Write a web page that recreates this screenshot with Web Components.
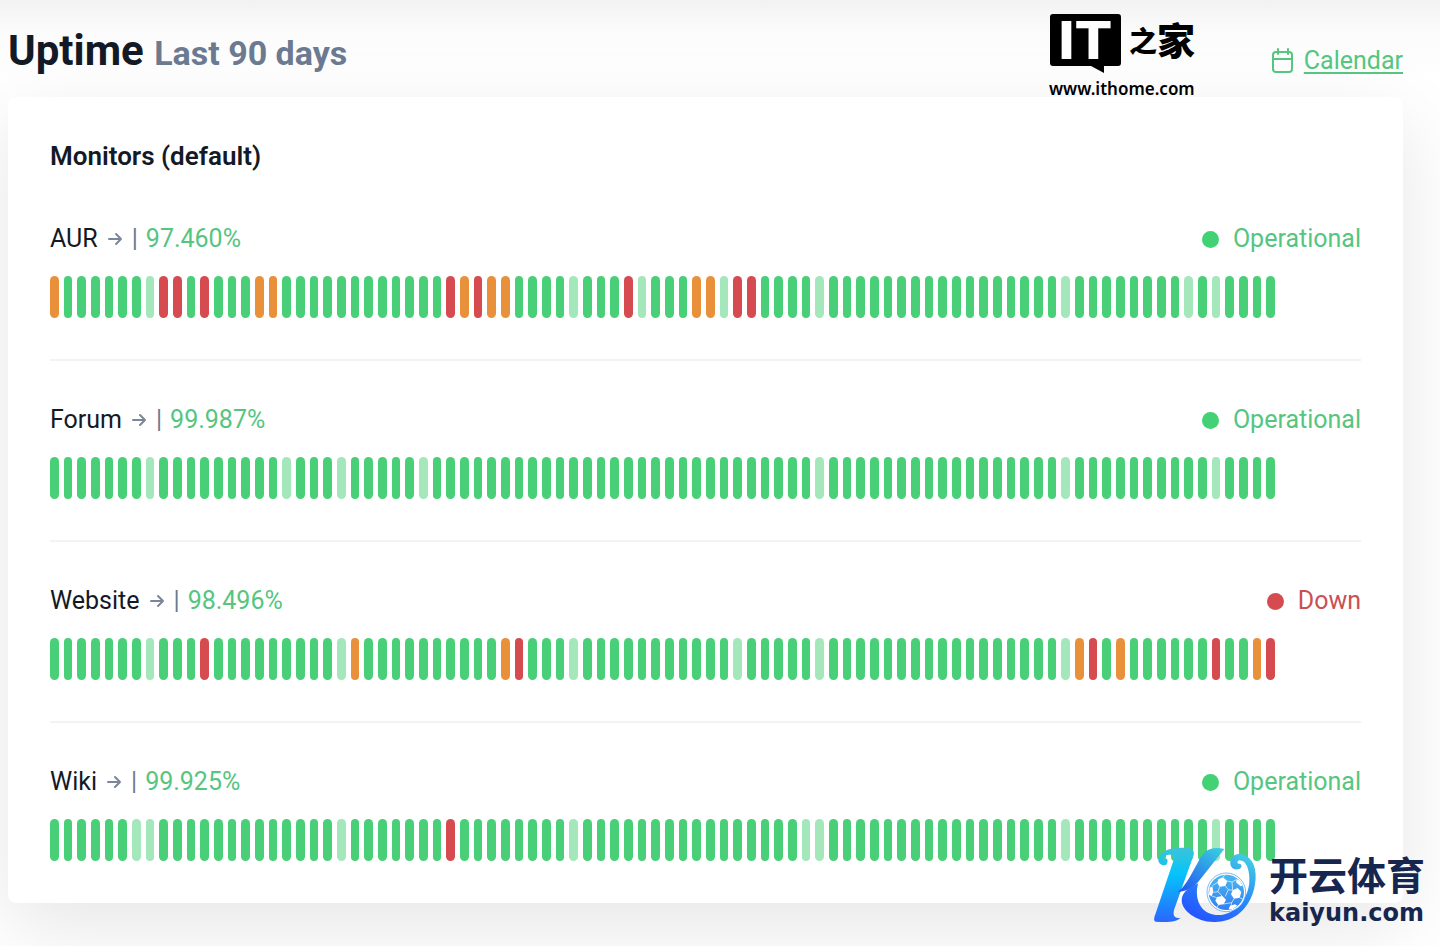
<!DOCTYPE html>
<html lang="en">
<head>
<meta charset="utf-8">
<meta name="viewport" content="width=device-width, initial-scale=1">
<title>Uptime</title>
<style>
  body {
    margin: 0;
    background: #fff;
    color: #131a26;
    font-family: Roboto, "Noto Sans CJK SC", sans-serif;
    font-size: 25px;
    line-height: 30px;
  }
</style>
</head>
<body>
<status-page>
  <uptime-header slot="header" heading="Uptime" period="Last 90 days">
    <ithome-logo></ithome-logo>
  </uptime-header>
  <monitor-group name="Monitors (default)">
    <monitor-row name="AUR" uptime="97.460%" status="up" partial="0 15 16 30 32 33 47 48" down="8 9 11 29 31 42 50 51" minor="7 38 43 49 56 74 83 85"></monitor-row>
    <monitor-row name="Forum" uptime="99.987%" status="up" minor="7 17 21 27 56 74 85"></monitor-row>
    <monitor-row name="Website" uptime="98.496%" status="down" partial="22 33 75 78 88" down="11 34 76 85 89" minor="7 21 38 50 56 74"></monitor-row>
    <monitor-row name="Wiki" uptime="99.925%" status="up" down="29" minor="6 7 21 38 55 56 74 85"></monitor-row>
  </monitor-group>
  <kaiyun-logo slot="sponsor"></kaiyun-logo>
</status-page>

<script>
class StatusPage extends HTMLElement {
  connectedCallback() {
    this.attachShadow({ mode: 'open' });
    this.shadowRoot.innerHTML = `
      <style>
        :host {
          display: block;
          position: relative;
          box-sizing: border-box;
          min-height: 100vh;
          padding: 0 37px 43px 8px;
          overflow: hidden;
          background: linear-gradient(#f2f2f2, #fbfbfb 32px, #fff 80px);
        }
        .sponsor {
          position: absolute;
          right: 15px;
          bottom: 18px;
        }
      </style>
      <slot name="header"></slot>
      <main><slot></slot></main>
      <div class="sponsor"><slot name="sponsor"></slot></div>
    `;
  }
}

class UptimeHeader extends HTMLElement {
  connectedCallback() {
    this.attachShadow({ mode: 'open' });
    this.shadowRoot.innerHTML = `
      <style>
        :host {
          display: flex;
          align-items: flex-start;
          height: 97px;
        }
        h1 {
          flex: 1;
          margin: 26px 0 0;
          font-size: 42px;
          line-height: 50px;
          font-weight: 700;
        }
        h1 small {
          font-size: 34px;
          color: #6b7a90;
        }
        a {
          display: flex;
          align-items: center;
          gap: 9px;
          margin: 46px 0 0 76px;
          color: #55c57f;
          text-underline-offset: 3px;
        }
        svg {
          width: 24px;
          height: 26px;
        }
      </style>
      <h1>${this.getAttribute('heading')} <small>${this.getAttribute('period')}</small></h1>
      <slot></slot>
      <a href="#calendar">
        <svg viewBox="0 0 24 26" fill="none" stroke="currentColor" stroke-width="2" stroke-linecap="round" stroke-linejoin="round" aria-hidden="true">
          <rect x="2" y="4" width="19" height="20" rx="3"/>
          <path d="M2 11h19M7 1v5M17 1v5"/>
        </svg>
        <span>Calendar</span>
      </a>
    `;
  }
}

class MonitorGroup extends HTMLElement {
  connectedCallback() {
    this.attachShadow({ mode: 'open' });
    this.shadowRoot.innerHTML = `
      <style>
        :host {
          display: block;
          padding: 44px 42px 42px;
          border-radius: 8px;
          background: #fff;
          box-shadow: 0 24px 80px rgba(0, 0, 0, 0.1);
        }
        h2 {
          margin: 0 0 53px;
          font-size: 26px;
          font-weight: 600;
        }
        ::slotted(:not(:last-child)) {
          margin-bottom: 44px;
          padding-bottom: 41px;
          border-bottom: 2px solid #f3f3f5;
        }
      </style>
      <h2>${this.getAttribute('name')}</h2>
      <slot></slot>
    `;
  }
}

class MonitorRow extends HTMLElement {
  days(attr) {
    return (this.getAttribute(attr) || '').split(' ').filter(Boolean).map(Number);
  }

  connectedCallback() {
    const up = this.getAttribute('status') === 'up';
    const states = Array(90).fill('ok');
    for (const kind of ['minor', 'partial', 'down']) {
      this.days(kind).forEach(day => { states[day] = kind; });
    }
    this.attachShadow({ mode: 'open' });
    this.shadowRoot.innerHTML = `
      <style>
        :host { display: block; }
        .top {
          display: flex;
          justify-content: space-between;
          margin-bottom: 22px;
        }
        .name, .status {
          display: flex;
          align-items: center;
        }
        .name a {
          display: flex;
          align-items: center;
          gap: 9px;
          color: inherit;
          text-decoration: none;
        }
        .name svg {
          width: 16px;
          height: 16px;
          color: #7b8799;
        }
        .sep {
          margin: 0 8px 0 9px;
          color: #6b7a90;
        }
        .percent, .up { color: #55c57f; }
        .down { color: #cb5054; }
        .status { gap: 14px; }
        .status::before {
          content: "";
          width: 17px;
          height: 17px;
          border-radius: 50%;
          background: #43d175;
        }
        .status.down::before { background: #d64b50; }
        .bars {
          display: grid;
          grid-template-columns: repeat(90, 1fr);
          column-gap: 5px;
          margin-right: 86px;
          height: 42px;
        }
        .bars i {
          border-radius: 5px;
          background: #48cf78;
        }
        .bars .minor { background: #a3e7ba; }
        .bars .partial { background: #e8913a; }
        .bars .down { background: #d64b50; }
      </style>
      <div class="top">
        <div class="name">
          <a href="#monitor">${this.getAttribute('name')}
            <svg viewBox="0 0 16 16" fill="none" stroke="currentColor" stroke-width="2" stroke-linecap="round" stroke-linejoin="round" aria-hidden="true"><path d="M2 8h12M9 3l5 5-5 5"/></svg>
          </a>
          <span class="sep">|</span>
          <span class="percent">${this.getAttribute('uptime')}</span>
        </div>
        <div class="status ${up ? 'up' : 'down'}">${up ? 'Operational' : 'Down'}</div>
      </div>
      <div class="bars">${states.map(s => `<i class="${s}"></i>`).join('')}</div>
    `;
  }
}

class IthomeLogo extends HTMLElement {
  connectedCallback() {
    this.attachShadow({ mode: 'open' });
    this.shadowRoot.innerHTML = `
      <style>
        :host {
          display: block;
          padding-top: 13px;
          color: #000;
        }
        svg {
          display: block;
          overflow: visible;
        }
        .it { font: 700 51px "DejaVu Sans", sans-serif; }
        .zhi { font: 900 28px "Noto Sans CJK SC", sans-serif; }
        .jia { font: 900 38px "Noto Sans CJK SC", sans-serif; }
        .url { font: 600 17px "Noto Sans", sans-serif; }
      </style>
      <svg width="146" height="84" viewBox="0 0 146 84" aria-label="ithome">
        <path d="M4 1h65q3 0 3 3v46q0 3-3 3H55v7l-13-7H4q-3 0-3-3V4q0-3 3-3z"/>
        <text class="it" x="8" y="46" fill="#fff">IT</text>
        <text class="zhi" x="80" y="39">之</text>
        <text class="jia" x="108" y="42">家</text>
        <text class="url" x="0" y="82">www.ithome.com</text>
      </svg>
    `;
  }
}

class KaiyunLogo extends HTMLElement {
  connectedCallback() {
    this.attachShadow({ mode: 'open' });
    this.shadowRoot.innerHTML = `
      <style>
        :host {
          display: flex;
          align-items: flex-start;
          gap: 10px;
          color: #17264f;
        }
        svg {
          width: 110px;
          height: 88px;
        }
        .zh {
          margin: 12px 0 5px;
          font: 700 39px/42px "Noto Sans CJK SC", sans-serif;
        }
        .url {
          font: 700 24px/28px "DejaVu Sans", sans-serif;
        }
      </style>
      <svg viewBox="0 0 330 264" aria-hidden="true">
        <defs>
          <linearGradient id="k" x1="0" y1="0" x2="0" y2="1">
            <stop offset="0" stop-color="#3cc3d8"/>
            <stop offset=".35" stop-color="#06c4fa"/>
            <stop offset="1" stop-color="#2a66ff"/>
          </linearGradient>
          <linearGradient id="arm" x1=".8" y1="0" x2=".1" y2="1">
            <stop offset="0" stop-color="#37c8e2"/>
            <stop offset="1" stop-color="#2355f2"/>
          </linearGradient>
          <linearGradient id="swirl" gradientUnits="userSpaceOnUse" x1="290" y1="40" x2="170" y2="245">
            <stop offset="0" stop-color="#45cee2"/>
            <stop offset=".55" stop-color="#2587fb"/>
            <stop offset="1" stop-color="#2556ff"/>
          </linearGradient>
          <linearGradient id="ball" x1="0" y1="0" x2="0" y2="1">
            <stop offset="0" stop-color="#48b9ef"/>
            <stop offset="1" stop-color="#347ff4"/>
          </linearGradient>
        </defs>
        <path fill="url(#k)" d="M52 74C35 80 25 66 29 54C38 27 78 21 111 24C128 23 137 31 134 45L76 207C70 225 76 237 95 233C82 246 62 247 20 245C13 242 15 234 19 223L72 66C77 51 74 44 65 44C51 43 42 50 45 58C52 51 61 60 52 74z"/>
        <path fill="url(#arm)" d="M85 157C105 142 117 121 132 94L154 54C170 29 187 19 226 27L148 125C128 151 106 151 85 157z"/>
        <path fill="url(#swirl)" d="M148 130C138 158 142 218 200 225C260 230 298 174 301 126C303 87 290 60 272 61C263 62 264 73 271 71C281 72 280 85 267 88C251 91 242 79 244 64C248 43 271 36 292 48C320 65 326 105 315 148C300 205 257 248 194 246C140 244 100 212 98 182C98 160 114 145 148 130z"/>
        <circle cx="232" cy="157" r="58" fill="#fff" stroke="#3798f7" stroke-width="2"/>
        <circle cx="232" cy="157" r="53" fill="url(#ball)"/>
        <g fill="#fff">
          <path d="M208 118l14-6 13 11-6 15-17 2-7-11z"/>
          <path d="M251 151l15-7 11 12-5 17-17 3-9-13z"/>
          <path d="M204 171l16-3 11 11-7 14-16 2-9-13z"/>
          <path d="M182 143l8-4 3 16-5 14-8-5z"/>
          <path d="M262 117l10 5 9 15-6 2-13-11z"/>
          <path d="M243 197l15-4 7 4-14 10-12 1z"/>
        </g>
        <path d="M190 137l16-10M229 138l9 11-9 20M238 149l15 2M212 140l-5 15-14 2M207 155l13 14M188 168l15 5M255 176l-7 12-24 4M248 188l-2 10M235 123l14 3 13-7M249 126l2 24M272 173l9 4M208 195l-4 7M222 112l5-7" fill="none" stroke="#fff" stroke-width="2"/>
      </svg>
      <div>
        <div class="zh">开云体育</div>
        <div class="url">kaiyun.com</div>
      </div>
    `;
  }
}

customElements.define('status-page', StatusPage);
customElements.define('uptime-header', UptimeHeader);
customElements.define('monitor-group', MonitorGroup);
customElements.define('monitor-row', MonitorRow);
customElements.define('ithome-logo', IthomeLogo);
customElements.define('kaiyun-logo', KaiyunLogo);
</script>
</body>
</html>
